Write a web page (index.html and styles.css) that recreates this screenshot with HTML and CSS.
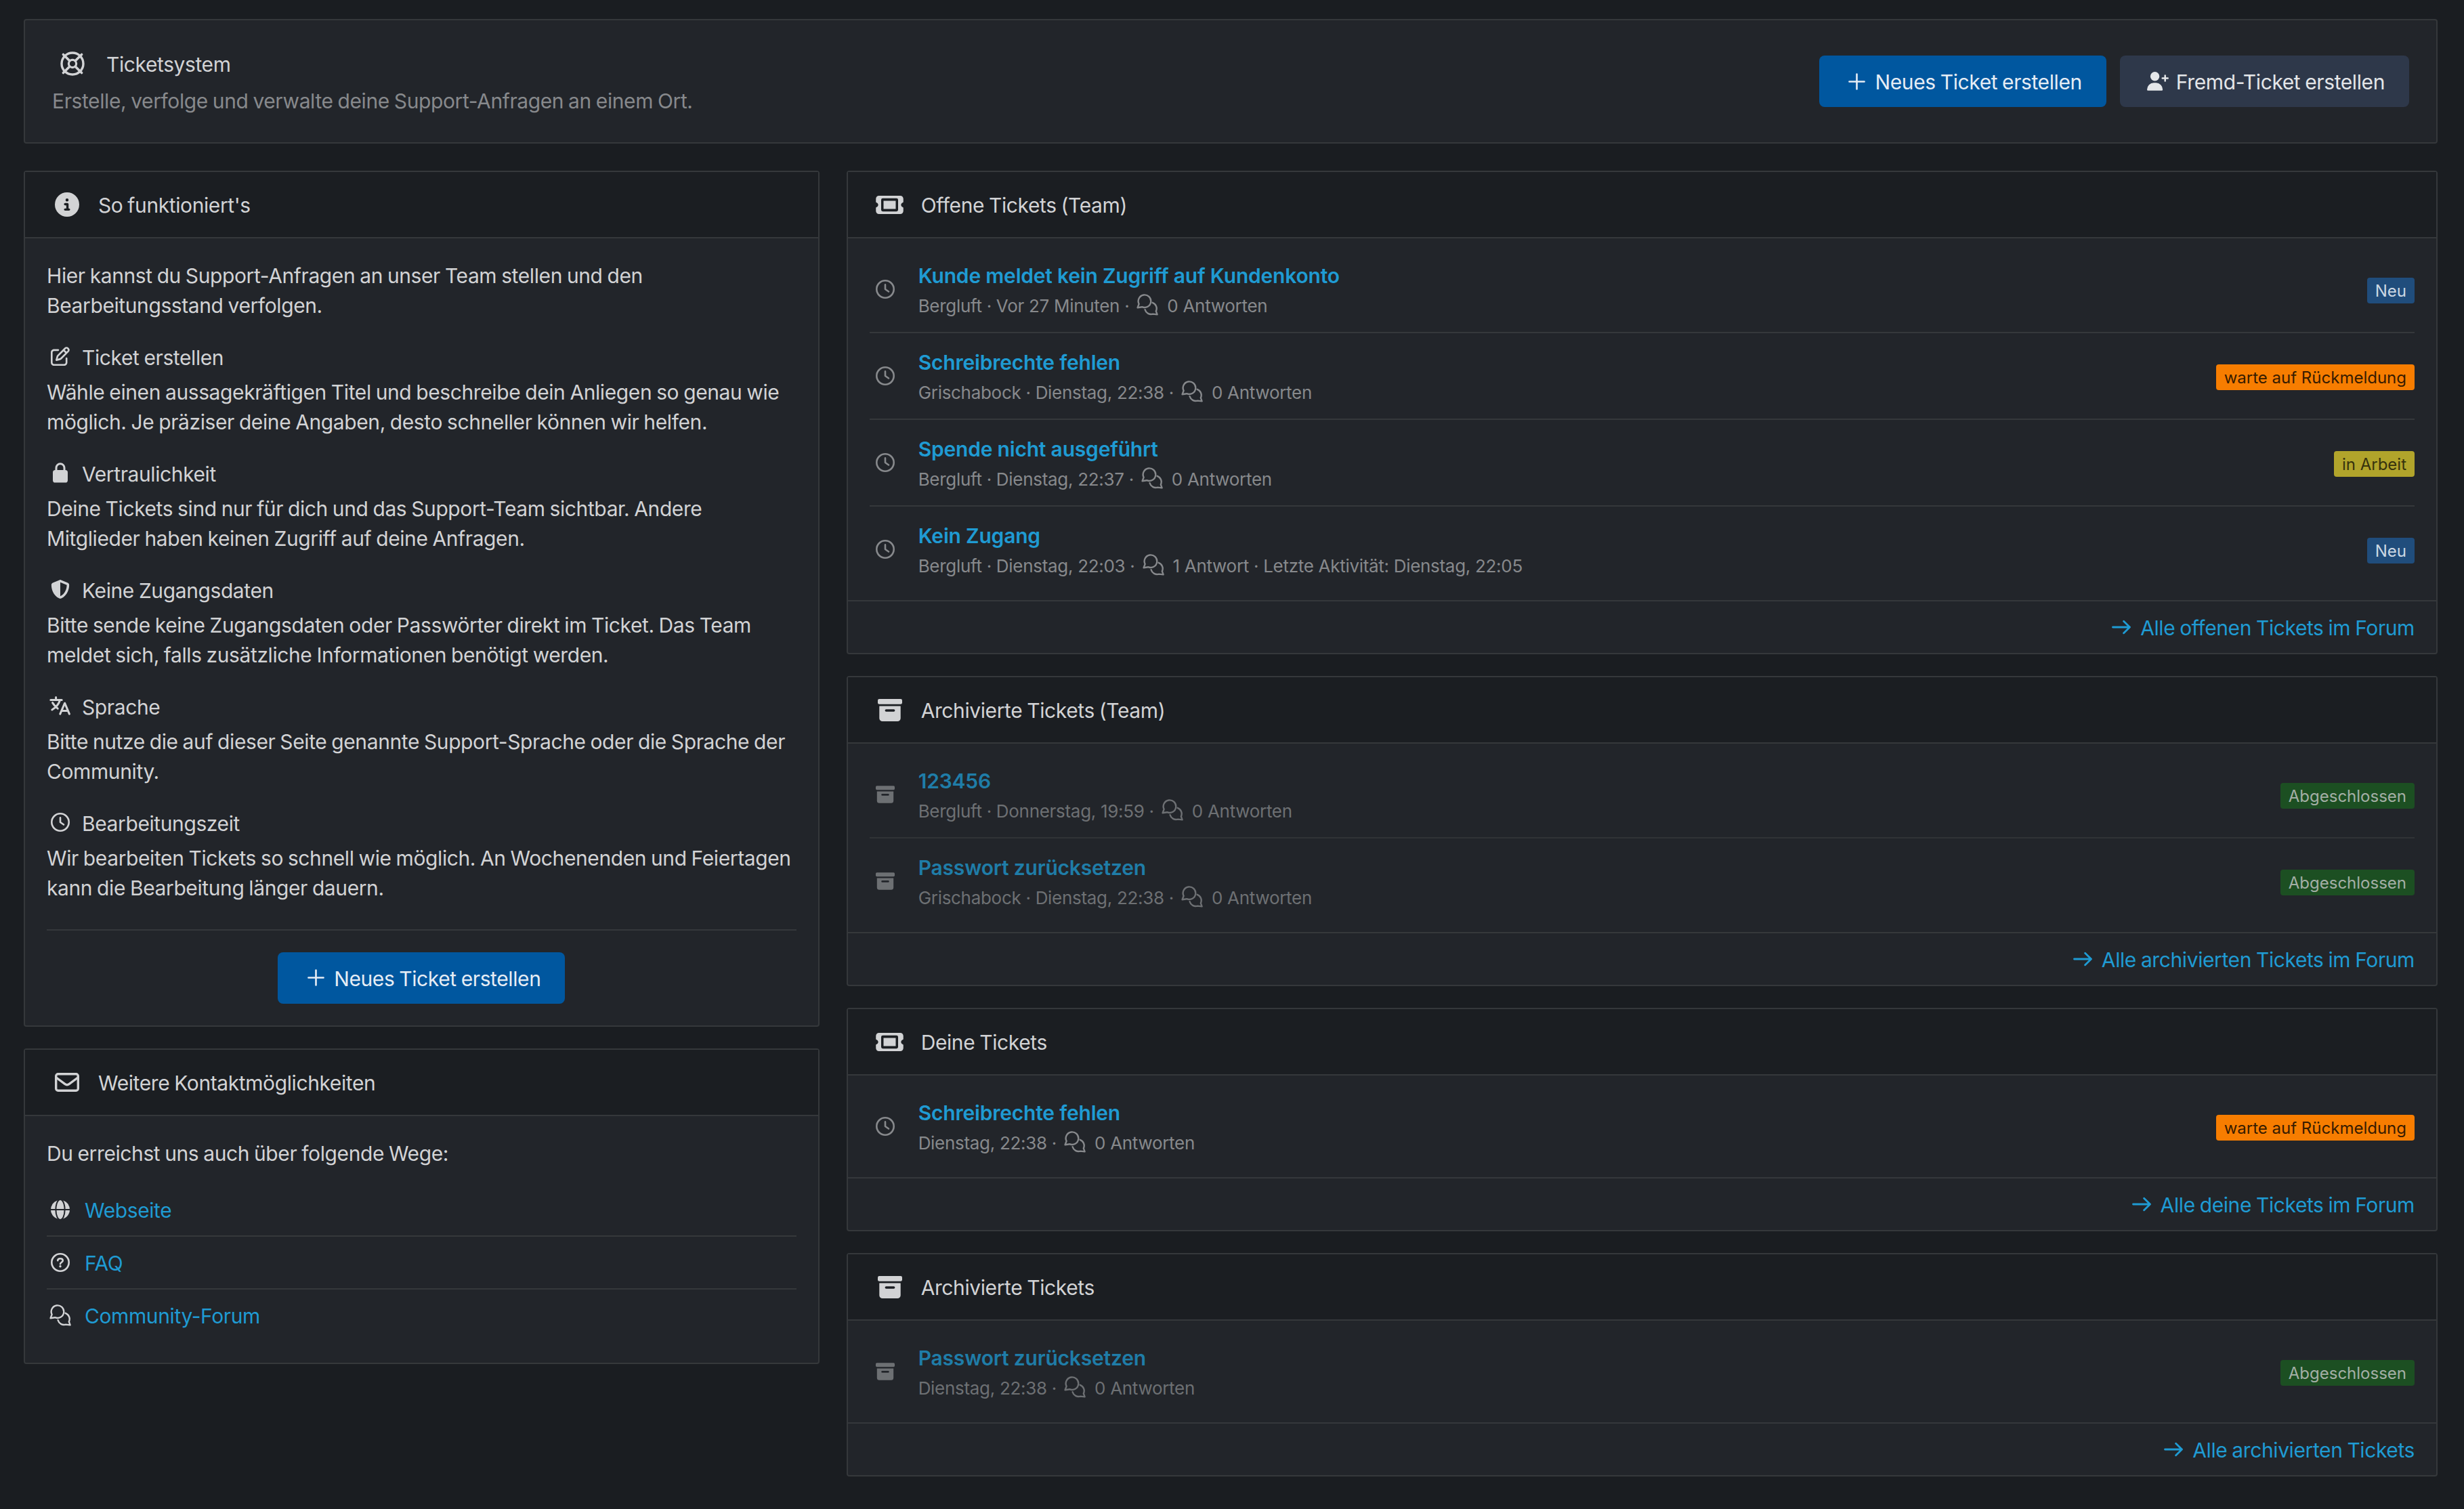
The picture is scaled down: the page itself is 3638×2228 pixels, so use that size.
FILE: index.html
```html
<!DOCTYPE html>
<html lang="de">
<head>
  <meta charset="UTF-8" />
  <title>Ticketsystem</title>
  <link rel="stylesheet" href="styles.css">
</head>
<body>

  <!-- Icons -->
  <svg class="sprite" xmlns="http://www.w3.org/2000/svg">
    <symbol id="life-ring" viewBox="0 0 36 36">
      <g fill="none" stroke="currentColor">
        <circle cx="18" cy="18" r="16" stroke-width="3.4" />
        <circle cx="18" cy="18" r="5.6" stroke-width="3.2" />
        <path d="M4.4 4.4l9.4 9.4M31.6 4.4l-9.4 9.4M4.4 31.6l9.4-9.4M31.6 31.6l-9.4-9.4" stroke-width="3.6" stroke-linecap="round" />
      </g>
    </symbol>
    <symbol id="plus" viewBox="0 0 26 26">
      <path d="M13 1.5v23M1.5 13h23" fill="none" stroke="currentColor" stroke-width="2.7" stroke-linecap="round" />
    </symbol>
    <symbol id="user-plus" viewBox="0 0 32 28">
      <circle cx="11.6" cy="6.7" r="6.7" fill="currentColor" />
      <path d="M0 26.2a10 10 0 0 1 10-10h3.2a10 10 0 0 1 10 10q0 1.6-1.6 1.6H1.6Q0 27.8 0 26.2z" fill="currentColor" />
      <path d="M26.7 5.4v8M22.7 9.4h8" stroke="currentColor" stroke-width="2.5" stroke-linecap="round" />
    </symbol>
    <symbol id="info" viewBox="0 0 512 512">
      <path fill="currentColor" d="M256 512A256 256 0 1 0 256 0a256 256 0 1 0 0 512zM216 336h24V272H216c-13.3 0-24-10.7-24-24s10.7-24 24-24h48c13.3 0 24 10.7 24 24v88h8c13.3 0 24 10.7 24 24s-10.7 24-24 24H216c-13.3 0-24-10.7-24-24s10.7-24 24-24zm40-208a32 32 0 1 1 0 64 32 32 0 1 1 0-64z" />
    </symbol>
    <symbol id="edit" viewBox="0 0 512 512">
      <path fill="currentColor" d="M441 58.9L453.1 71c9.4 9.4 9.4 24.6 0 33.9L424 134.1 377.9 88 407 58.9c9.4-9.4 24.6-9.4 33.9 0zM209.8 256.2L344 121.9 390.1 168 255.8 302.2c-2.9 2.9-6.5 5-10.4 6.1l-58.5 16.7 16.7-58.5c1.1-3.9 3.2-7.5 6.1-10.4zM373.1 25L175.8 222.2c-8.7 8.7-15 19.4-18.3 31.1l-28.6 100c-2.4 8.4-.1 17.4 6.1 23.6s15.2 8.5 23.6 6.1l100-28.6c11.8-3.4 22.5-9.7 31.1-18.3L487 138.9c28.1-28.1 28.1-73.7 0-101.8L474.9 25C446.8-3.1 401.2-3.1 373.1 25zM88 64C39.4 64 0 103.4 0 152V424c0 48.6 39.4 88 88 88H360c48.6 0 88-39.4 88-88V312c0-13.3-10.7-24-24-24s-24 10.7-24 24V424c0 22.1-17.9 40-40 40H88c-22.1 0-40-17.9-40-40V152c0-22.1 17.9-40 40-40H200c13.3 0 24-10.7 24-24s-10.7-24-24-24H88z" />
    </symbol>
    <symbol id="lock" viewBox="0 0 22 30">
      <rect x="0" y="11" width="22" height="18.5" rx="3.6" fill="currentColor" />
      <path d="M5 13V7.8a6 6 0 0 1 12 0V13" fill="none" stroke="currentColor" stroke-width="3" />
    </symbol>
    <symbol id="shield" viewBox="0 0 512 512">
      <path fill="currentColor" fill-rule="evenodd" d="M256 0c4.6 0 9.2 1 13.4 2.9L457.7 82.8c22 9.3 38.4 31 38.3 57.2c-.5 99.2-41.3 280.7-213.6 363.2c-16.7 8-36.1 8-52.8 0C57.3 420.7 16.5 239.2 16 140c-.1-26.2 16.3-47.9 38.3-57.2L242.7 2.9C246.8 1 251.4 0 256 0zm0 66.8V444.8C394 378 431.1 230.1 432 141.4L256 66.8z" />
    </symbol>
    <symbol id="language" viewBox="0 0 32 28">
      <g fill="none" stroke="currentColor" stroke-width="3" stroke-linecap="round" stroke-linejoin="round">
        <path d="M1.8 5.6h16.4M9.6 1.6v4M15.6 5.8C13.8 11.4 9.6 16.6 3.8 20M4.6 9.6c2.2 3.6 4.6 6.2 7.6 8.6" />
        <path d="M15.8 26.2l6.8-16 6.8 16M18.4 21.6h8.4" />
      </g>
    </symbol>
    <symbol id="clock" viewBox="0 0 28 28">
      <g fill="none" stroke="currentColor" stroke-width="2.6">
        <circle cx="14" cy="14" r="12.7" />
        <path d="M14 7.4V14l5 3.5" stroke-linecap="round" stroke-linejoin="round" />
      </g>
    </symbol>
    <symbol id="envelope" viewBox="0 0 36 28">
      <rect x="1.7" y="1.7" width="32.6" height="24.6" rx="3" fill="none" stroke="currentColor" stroke-width="3.4" />
      <path d="M2 7l13 9.6q3 2.2 6 0L34 7" fill="none" stroke="currentColor" stroke-width="3.4" />
    </symbol>
    <symbol id="globe" viewBox="0 0 28 28">
      <circle cx="14" cy="14" r="14" fill="currentColor" />
      <g fill="none" stroke="#22252a" stroke-width="2">
        <path d="M0 14h28" />
        <ellipse cx="14" cy="14" rx="6.6" ry="15" />
      </g>
    </symbol>
    <symbol id="question" viewBox="0 0 28 28">
      <g fill="none" stroke="currentColor" stroke-width="2.6">
        <circle cx="14" cy="14" r="12.7" />
        <path d="M10.2 11.2q.2-3 3.8-3 3.8 0 3.8 3c0 2.4-3.8 2.6-3.8 5" stroke-linecap="round" />
      </g>
      <circle cx="14" cy="19.8" r="1.7" fill="currentColor" />
    </symbol>
    <symbol id="comments" viewBox="0 0 32 32">
      <g fill="none" stroke="currentColor" stroke-width="2.4" stroke-linecap="round" stroke-linejoin="round">
        <path d="M1.6 20.2l2-5.4a9.3 9.3 0 1 1 4.6 4.4z" />
        <path d="M23.6 12.8a9.2 9.2 0 0 1 5.2 12.6l1.8 5-6.4-.8a9.3 9.3 0 0 1-11.6-6.4" />
      </g>
    </symbol>
    <symbol id="ticket" viewBox="0 64 576 384">
      <path fill="currentColor" fill-rule="evenodd" d="M64 64C28.7 64 0 92.7 0 128v64c0 8.8 7.4 15.7 15.7 18.6C34.5 217.1 48 235 48 256s-13.5 38.9-32.3 45.4C7.4 304.3 0 311.2 0 320v64c0 35.3 28.7 64 64 64H512c35.3 0 64-28.7 64-64V320c0-8.8-7.4-15.7-15.7-18.6C541.5 294.9 528 277 528 256s13.5-38.9 32.3-45.4c8.3-2.9 15.7-9.8 15.7-18.6V128c0-35.3-28.7-64-64-64H64zM144 118h288q34 0 34 34v208q0 34-34 34H144q-34 0-34-34V152q0-34 34-34zM160 170v172h256V170z" />
    </symbol>
    <symbol id="archive" viewBox="0 0 36 33">
      <rect x="0" y="0" width="36" height="7.8" rx="2.2" fill="currentColor" />
      <path fill="currentColor" fill-rule="evenodd" d="M2.3 10.6h31.4V28.4a4.6 4.6 0 0 1-4.6 4.6H6.9a4.6 4.6 0 0 1-4.6-4.6zM12.4 15.2a1.8 1.8 0 0 0 0 3.6h11.2a1.8 1.8 0 0 0 0-3.6z" />
    </symbol>
    <symbol id="arrow" viewBox="0 0 28 22">
      <path d="M1.5 11h25M17.6 2.2l8.9 8.8-8.9 8.8" fill="none" stroke="currentColor" stroke-width="2.8" stroke-linecap="round" stroke-linejoin="round" />
    </symbol>
  </svg>

  <header class="card page-header">
    <div>
      <div class="page-title">
        <span class="icon-lg"><svg width="36" height="36"><use href="#life-ring" /></svg></span>
        <h1>Ticketsystem</h1>
      </div>
      <p class="page-description">Erstelle, verfolge und verwalte deine Support-Anfragen an einem Ort.</p>
    </div>
    <div class="buttons">
      <a class="button primary"><span class="icon"><svg width="25" height="25"><use href="#plus" /></svg></span>Neues Ticket erstellen</a>
      <a class="button"><span class="icon"><svg width="32" height="28"><use href="#user-plus" /></svg></span>Fremd-Ticket erstellen</a>
    </div>
  </header>

  <div class="columns">

    <aside class="column">
      <section class="card">
        <h2 class="card-head"><span class="icon-lg"><svg width="36" height="36"><use href="#info" /></svg></span>So funktioniert's</h2>
        <div class="card-body">
          <p>Hier kannst du Support-Anfragen an unser Team stellen und den<br>Bearbeitungsstand verfolgen.</p>

          <h3 class="topic"><span class="icon"><svg width="28" height="28"><use href="#edit" /></svg></span>Ticket erstellen</h3>
          <p>Wähle einen aussagekräftigen Titel und beschreibe dein Anliegen so genau wie<br>möglich. Je präziser deine Angaben, desto schneller können wir helfen.</p>

          <h3 class="topic"><span class="icon"><svg width="22" height="30"><use href="#lock" /></svg></span>Vertraulichkeit</h3>
          <p>Deine Tickets sind nur für dich und das Support-Team sichtbar. Andere<br>Mitglieder haben keinen Zugriff auf deine Anfragen.</p>

          <h3 class="topic"><span class="icon"><svg width="28" height="28"><use href="#shield" /></svg></span>Keine Zugangsdaten</h3>
          <p>Bitte sende keine Zugangsdaten oder Passwörter direkt im Ticket. Das Team<br>meldet sich, falls zusätzliche Informationen benötigt werden.</p>

          <h3 class="topic"><span class="icon"><svg width="32" height="28"><use href="#language" /></svg></span>Sprache</h3>
          <p>Bitte nutze die auf dieser Seite genannte Support-Sprache oder die Sprache der<br>Community.</p>

          <h3 class="topic"><span class="icon"><svg width="28" height="28"><use href="#clock" /></svg></span>Bearbeitungszeit</h3>
          <p>Wir bearbeiten Tickets so schnell wie möglich. An Wochenenden und Feiertagen<br>kann die Bearbeitung länger dauern.</p>

          <div class="card-action">
            <a class="button primary"><span class="icon"><svg width="25" height="25"><use href="#plus" /></svg></span>Neues Ticket erstellen</a>
          </div>
        </div>
      </section>

      <section class="card">
        <h2 class="card-head"><span class="icon-lg"><svg width="36" height="28"><use href="#envelope" /></svg></span>Weitere Kontaktmöglichkeiten</h2>
        <div class="card-body">
          <p>Du erreichst uns auch über folgende Wege:</p>
          <ul class="contacts">
            <li><span class="icon"><svg width="28" height="28"><use href="#globe" /></svg></span><a>Webseite</a></li>
            <li><span class="icon"><svg width="28" height="28"><use href="#question" /></svg></span><a>FAQ</a></li>
            <li><span class="icon"><svg width="32" height="32"><use href="#comments" /></svg></span><a>Community-Forum</a></li>
          </ul>
        </div>
      </section>
    </aside>

    <main class="column">
      <section class="card">
        <h2 class="card-head"><span class="icon-lg"><svg width="41" height="27"><use href="#ticket" /></svg></span>Offene Tickets (Team)</h2>
        <ul class="tickets">
          <li>
            <span class="state"><svg width="28" height="28"><use href="#clock" /></svg></span>
            <div class="info">
              <a class="title">Kunde meldet kein Zugriff auf Kundenkonto</a>
              <div class="meta">Bergluft · Vor 27 Minuten · <svg width="32" height="32"><use href="#comments" /></svg>0 Antworten</div>
            </div>
            <span class="badge blue">Neu</span>
          </li>
          <li>
            <span class="state"><svg width="28" height="28"><use href="#clock" /></svg></span>
            <div class="info">
              <a class="title">Schreibrechte fehlen</a>
              <div class="meta">Grischabock · Dienstag, 22:38 · <svg width="32" height="32"><use href="#comments" /></svg>0 Antworten</div>
            </div>
            <span class="badge orange">warte auf Rückmeldung</span>
          </li>
          <li>
            <span class="state"><svg width="28" height="28"><use href="#clock" /></svg></span>
            <div class="info">
              <a class="title">Spende nicht ausgeführt</a>
              <div class="meta">Bergluft · Dienstag, 22:37 · <svg width="32" height="32"><use href="#comments" /></svg>0 Antworten</div>
            </div>
            <span class="badge yellow">in Arbeit</span>
          </li>
          <li>
            <span class="state"><svg width="28" height="28"><use href="#clock" /></svg></span>
            <div class="info">
              <a class="title">Kein Zugang</a>
              <div class="meta">Bergluft · Dienstag, 22:03 · <svg width="32" height="32"><use href="#comments" /></svg>1 Antwort · Letzte Aktivität: Dienstag, 22:05</div>
            </div>
            <span class="badge blue">Neu</span>
          </li>
        </ul>
        <div class="card-foot"><a><span class="icon"><svg width="28" height="22"><use href="#arrow" /></svg></span>Alle offenen Tickets im Forum</a></div>
      </section>

      <section class="card">
        <h2 class="card-head"><span class="icon-lg"><svg width="36" height="33"><use href="#archive" /></svg></span>Archivierte Tickets (Team)</h2>
        <ul class="tickets">
          <li class="archived">
            <span class="state"><svg width="28" height="26"><use href="#archive" /></svg></span>
            <div class="info">
              <a class="title">123456</a>
              <div class="meta">Bergluft · Donnerstag, 19:59 · <svg width="32" height="32"><use href="#comments" /></svg>0 Antworten</div>
            </div>
            <span class="badge green">Abgeschlossen</span>
          </li>
          <li class="archived">
            <span class="state"><svg width="28" height="26"><use href="#archive" /></svg></span>
            <div class="info">
              <a class="title">Passwort zurücksetzen</a>
              <div class="meta">Grischabock · Dienstag, 22:38 · <svg width="32" height="32"><use href="#comments" /></svg>0 Antworten</div>
            </div>
            <span class="badge green">Abgeschlossen</span>
          </li>
        </ul>
        <div class="card-foot"><a><span class="icon"><svg width="28" height="22"><use href="#arrow" /></svg></span>Alle archivierten Tickets im Forum</a></div>
      </section>

      <section class="card">
        <h2 class="card-head"><span class="icon-lg"><svg width="41" height="27"><use href="#ticket" /></svg></span>Deine Tickets</h2>
        <ul class="tickets">
          <li>
            <span class="state"><svg width="28" height="28"><use href="#clock" /></svg></span>
            <div class="info">
              <a class="title">Schreibrechte fehlen</a>
              <div class="meta">Dienstag, 22:38 · <svg width="32" height="32"><use href="#comments" /></svg>0 Antworten</div>
            </div>
            <span class="badge orange">warte auf Rückmeldung</span>
          </li>
        </ul>
        <div class="card-foot"><a><span class="icon"><svg width="28" height="22"><use href="#arrow" /></svg></span>Alle deine Tickets im Forum</a></div>
      </section>

      <section class="card">
        <h2 class="card-head"><span class="icon-lg"><svg width="36" height="33"><use href="#archive" /></svg></span>Archivierte Tickets</h2>
        <ul class="tickets">
          <li class="archived">
            <span class="state"><svg width="28" height="26"><use href="#archive" /></svg></span>
            <div class="info">
              <a class="title">Passwort zurücksetzen</a>
              <div class="meta">Dienstag, 22:38 · <svg width="32" height="32"><use href="#comments" /></svg>0 Antworten</div>
            </div>
            <span class="badge green">Abgeschlossen</span>
          </li>
        </ul>
        <div class="card-foot"><a><span class="icon"><svg width="28" height="22"><use href="#arrow" /></svg></span>Alle archivierten Tickets</a></div>
      </section>
    </main>

  </div>

</body>
</html>
```

FILE: styles.css
```css
* {
  box-sizing: border-box;
}

body {
  margin: 0;
  padding: 28px 39px 48px 35px;
  min-height: 2228px;
  background-color: #1a1d21;
  color: #d2d3d5;
  font-family: Inter, "Liberation Sans", sans-serif;
  font-size: 30px;
  line-height: 44.4px;
  letter-spacing: -0.4px;
  word-spacing: -1.1px;
}

h1, h2, h3, p, ul {
  margin: 0;
  padding: 0;
  font-size: inherit;
  font-weight: 400;
  list-style: none;
}

a {
  color: #1f9bd3;
}

p, a, h1, h2, h3 {
  white-space: nowrap;
}

svg {
  display: block;
  flex: none;
}

.sprite {
  display: none;
}

.icon, .icon-lg, .state {
  display: flex;
  align-items: center;
  justify-content: center;
  flex: none;
}

/* labels sit a little lower than their icons */
.icon, .icon-lg {
  margin-top: -3px;
}

.icon {
  width: 40px;
}

.icon-lg {
  width: 60px;
}

.card {
  background-color: #22252a;
  border: 2px solid #35383b;
  border-radius: 4px;
}

/* Header */
.page-header {
  display: flex;
  align-items: center;
  justify-content: space-between;
  height: 184px;
  padding: 0 40px;
  margin-bottom: 40px;
}

.page-title {
  display: flex;
  align-items: center;
  gap: 20px;
  height: 51px;
  padding-top: 3px;
  margin-bottom: 8px;
}

.page-description {
  color: #87898c;
}

.buttons {
  display: flex;
  gap: 20px;
}

.button {
  display: flex;
  align-items: center;
  gap: 7px;
  height: 76px;
  padding: 3px 36px 0;
  border-radius: 8px;
  background-color: #2e384a;
  color: #e4e6e9;
}

.button.primary {
  background-color: #00579f;
  color: #e6edf5;
}

/* Layout */
.columns {
  display: grid;
  grid-template-columns: 1fr 2fr;
  gap: 40px;
  align-items: start;
}

.column {
  display: flex;
  flex-direction: column;
  gap: 32px;
}

.card-head {
  display: flex;
  align-items: center;
  gap: 16px;
  height: 98px;
  padding: 3px 32px 0;
  background-color: #1b1e22;
  border-bottom: 2px solid #35383b;
}

.card-body {
  padding: 33px 32px 32px;
}

.topic {
  display: flex;
  align-items: center;
  gap: 12px;
  height: 43.2px;
  padding-top: 3px;
  margin: 31px 0 9px;
}

.card-action {
  display: flex;
  justify-content: center;
  margin-top: 38px;
  padding-top: 32px;
  border-top: 2px solid #35383b;
}

.contacts {
  margin-top: 22.6px;
}

.contacts li {
  display: flex;
  align-items: center;
  gap: 16px;
  height: 78px;
  padding-top: 3px;
  border-bottom: 2px solid #35383b;
}

.contacts li:last-child {
  height: 76px;
  border-bottom: none;
}

/* Tickets */
.tickets {
  padding: 32px;
}

.tickets li {
  display: flex;
  align-items: center;
  padding-bottom: 20px;
  margin-bottom: 20px;
  border-bottom: 2px solid #35383b;
}

.tickets li:last-child {
  padding-bottom: 0;
  margin-bottom: 0;
  border-bottom: none;
}

.tickets .archived {
  opacity: 0.75;
}

.state {
  width: 47px;
  color: #87898c;
}

.info {
  flex: 1;
  height: 86px;
  padding-top: 1px;
  margin-left: 25px;
}

.title {
  display: block;
  font-weight: 600;
  letter-spacing: -0.2px;
  word-spacing: 0;
}

.meta {
  display: flex;
  align-items: center;
  height: 43.6px;
  padding-top: 2px;
  color: #87898c;
  font-size: 26px;
  letter-spacing: -0.3px;
  word-spacing: 0;
  white-space: pre;
}

.meta svg {
  margin: -4px 13px 0 4px;
}

.badge {
  height: 38px;
  margin-top: 4px;
  padding: 0 12px;
  border-radius: 4px;
  font-size: 24px;
  line-height: 39px;
  letter-spacing: 0;
  word-spacing: 0;
  white-space: nowrap;
}

.blue {
  background-color: #204d7c;
  color: #ccd8e4;
}

.orange {
  background-color: #f77d00;
  color: #371c00;
}

.yellow {
  background-color: #b1a42b;
  color: #36320d;
}

.green {
  background-color: #1b5e20;
  color: #cfdccf;
}

.card-foot {
  display: flex;
  justify-content: flex-end;
  height: 78px;
  padding: 3px 32px 0;
  border-top: 2px solid #35383b;
}

.card-foot a {
  display: flex;
  align-items: center;
  gap: 8px;
}
```
